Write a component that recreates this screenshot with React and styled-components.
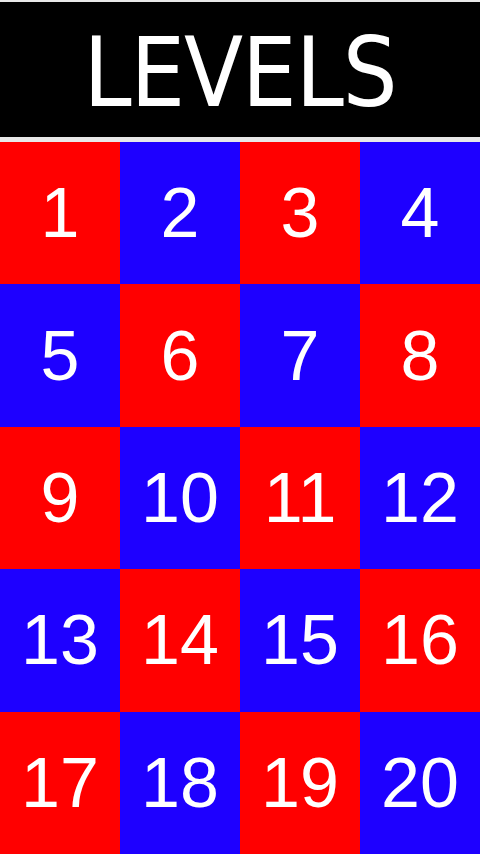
import React from "react";
import styled, { createGlobalStyle } from "styled-components";

const GlobalStyle = createGlobalStyle`
  html, body {
    margin: 0;
    padding: 0;
    background: #e4e4e4;
  }
  #root {
    width: 480px;
    height: 854px;
  }
`;

const Screen = styled.div`
  width: 480px;
  height: 854px;
  display: flex;
  flex-direction: column;
  padding-top: 2px;
  gap: 5px;
  box-sizing: border-box;
  overflow: hidden;
  background: #e8e8e8;
`;

const Header = styled.header`
  height: 135px;
  flex: none;
  background: #000;
  display: flex;
  align-items: center;
  justify-content: center;
`;

const Title = styled.h1`
  margin: 0;
  padding-top: 6px;
  color: #fff;
  font-family: "Comic Sans MS", "DejaVu Sans Condensed", "DejaVu Sans", sans-serif;
  font-weight: 400;
  font-size: 96px;
  line-height: 1;
  letter-spacing: -1px;
`;

const Grid = styled.main`
  flex: 1;
  display: grid;
  grid-template-columns: repeat(4, 1fr);
  grid-template-rows: repeat(5, 1fr);
`;

const Cell = styled.button`
  border: none;
  margin: 0;
  padding: 0;
  background: ${(p) => (p.$red ? "#ff0000" : "#1e00ff")};
  color: #fff;
  font-family: "Liberation Sans", Arial, sans-serif;
  font-size: 70px;
  line-height: 1;
  display: flex;
  align-items: center;
  justify-content: center;
  cursor: pointer;
`;

const levels = Array.from({ length: 20 }, (_, i) => i + 1);

export default function App() {
  return (
    <>
      <GlobalStyle />
      <Screen>
        <Header>
          <Title>LEVELS</Title>
        </Header>
        <Grid>
          {levels.map((n) => {
            const row = Math.floor((n - 1) / 4);
            const col = (n - 1) % 4;
            return (
              <Cell key={n} $red={(row + col) % 2 === 0}>
                {n}
              </Cell>
            );
          })}
        </Grid>
      </Screen>
    </>
  );
}
